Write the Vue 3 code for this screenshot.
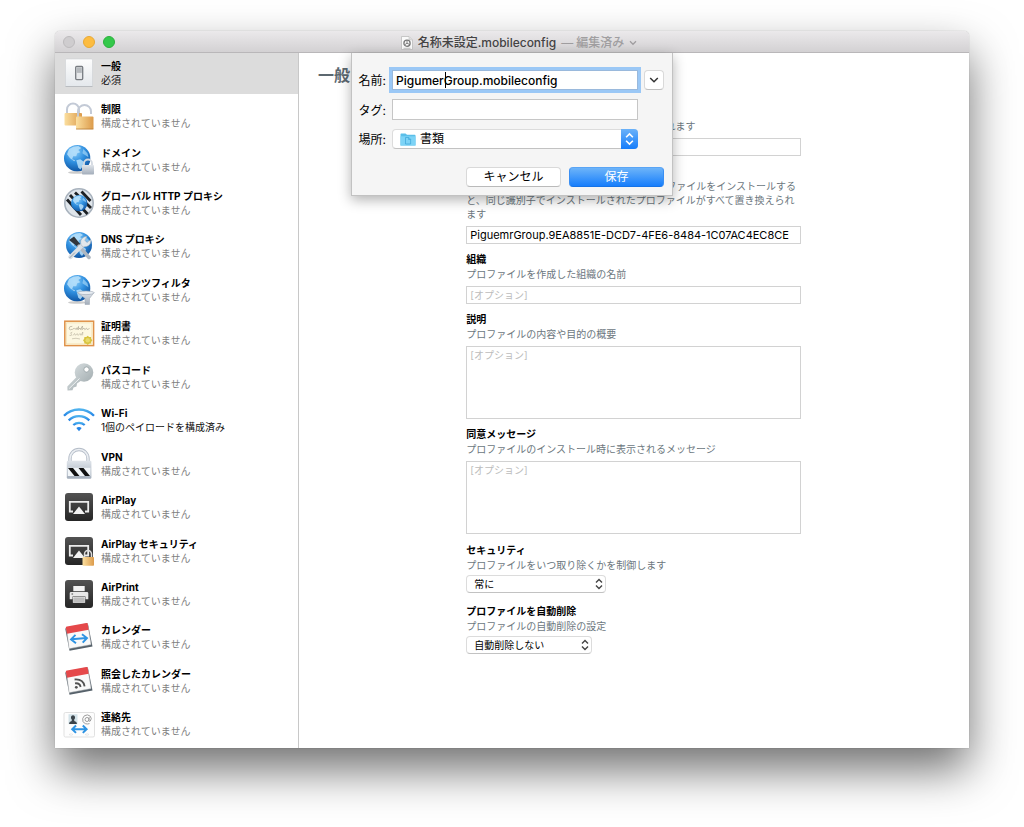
<script setup>
import { ref } from 'vue'

const none = '構成されていません'
const payloads = [
  { icon: 'general', name: '一般', note: '必須', dark: true },
  { icon: 'restrictions', name: '制限', note: none },
  { icon: 'domains', name: 'ドメイン', note: none },
  { icon: 'proxy', name: 'グローバル HTTP プロキシ', note: none },
  { icon: 'dns', name: 'DNS プロキシ', note: none },
  { icon: 'filter', name: 'コンテンツフィルタ', note: none },
  { icon: 'certificate', name: '証明書', note: none },
  { icon: 'passcode', name: 'パスコード', note: none },
  { icon: 'wifi', name: 'Wi-Fi', note: '1個のペイロードを構成済み', dark: true },
  { icon: 'vpn', name: 'VPN', note: none },
  { icon: 'airplay', name: 'AirPlay', note: none },
  { icon: 'airplaylock', name: 'AirPlay セキュリティ', note: none },
  { icon: 'airprint', name: 'AirPrint', note: none },
  { icon: 'calendar', name: 'カレンダー', note: none },
  { icon: 'subscribed', name: '照会したカレンダー', note: none },
  { icon: 'contacts', name: '連絡先', note: none },
]

const selected = ref('general')
const fileName = ref('PigumerGroup.mobileconfig')
const tags = ref('')
const profileName = ref('')
const identifier = ref('PiguemrGroup.9EA8851E-DCD7-4FE6-8484-1C07AC4EC8CE')
const organization = ref('')
const description = ref('')
const consent = ref('')
</script>

<template>
  <svg class="defs" aria-hidden="true">
    <defs>
      <radialGradient id="sea" cx="0.4" cy="0.25" r="0.8">
        <stop offset="0" stop-color="#8fd0fb" />
        <stop offset="0.5" stop-color="#2f8fdf" />
        <stop offset="1" stop-color="#0d4f9c" />
      </radialGradient>
      <linearGradient id="gold" x1="0" x2="1">
        <stop offset="0" stop-color="#fbdf9f" />
        <stop offset="1" stop-color="#dc9b4b" />
      </linearGradient>
      <linearGradient id="steel" x1="0" y1="0" x2="0" y2="1">
        <stop offset="0" stop-color="#dfe4ea" />
        <stop offset="1" stop-color="#a3adba" />
      </linearGradient>
      <linearGradient id="plate" x1="0" y1="0" x2="0" y2="1">
        <stop offset="0" stop-color="#fdfdfd" />
        <stop offset="1" stop-color="#e4e8ec" />
      </linearGradient>
      <linearGradient id="tile" x1="0" y1="0" x2="0" y2="1">
        <stop offset="0" stop-color="#525252" />
        <stop offset="1" stop-color="#252525" />
      </linearGradient>
      <linearGradient id="wave" x1="0" y1="0" x2="0" y2="1">
        <stop offset="0" stop-color="#4db1ee" />
        <stop offset="1" stop-color="#2484e6" />
      </linearGradient>
      <linearGradient id="keymetal" x1="0" y1="0" x2="1" y2="1">
        <stop offset="0" stop-color="#d5dcde" />
        <stop offset="1" stop-color="#a3adb0" />
      </linearGradient>
      <symbol id="globe" viewBox="0 0 26 26">
        <circle cx="13" cy="13" r="13" fill="url(#sea)" />
        <path d="M5 4 Q9 1 14 1 L17 3 14 5 16 7 13 8 12 11 9 11 8 14 11 15 10 16 6 13 3 9z" fill="#b9e0fa" opacity="0.85" />
        <path d="M12 15 L16 14 20 17 19 20 16 24 14 22z" fill="#b9e0fa" opacity="0.85" />
        <path d="M19 4 L23 8 24 12 21 10 18 8z" fill="#9bd0f6" opacity="0.75" />
      </symbol>
      <symbol id="airplay-tile" viewBox="0 0 30 30">
        <rect x="1" y="1" width="28" height="28" rx="3" fill="url(#tile)" />
        <path d="M9 19.5H5.8V9.8H24.2V19.5H21" fill="none" stroke="#ececec" stroke-width="1.8" />
        <path d="M15 14.5 21 22H9z" fill="#f2f2f2" />
      </symbol>
      <symbol id="calendar-page" viewBox="0 0 30 30">
        <path d="M1.2 6.6 23.8 1.2 28.5 24.5 5.5 28.8z" fill="#56616a" />
        <path d="M2.5 5.8 23.5 1.4 27 22.5 5.2 26.6z" fill="#f9f9f9" stroke="#c7c9cb" stroke-width="0.5" />
        <path d="M1.8 5.6Q2 4.8 3 4.6L22.4 1Q23.4 .8 23.7 1.8L24.7 7.8 3 11.8z" fill="#e5484a" />
      </symbol>
    </defs>
  </svg>

  <div class="desktop">
    <section class="window">
      <header class="titlebar">
        <div class="lights">
          <button class="light off" aria-label="閉じる"></button>
          <button class="light yellow" aria-label="しまう"></button>
          <button class="light green" aria-label="拡大"></button>
        </div>
        <h1 class="title">
          <svg class="doc" viewBox="0 0 12 14" aria-hidden="true">
            <path d="M.5.5H8L11.5 4V13.5H.5z" fill="#fafafa" stroke="#bdbdbd" stroke-width="0.8" />
            <path d="M8 .5V4h3.5" fill="#ddd" stroke="#c4c4c4" stroke-width="0.6" />
            <circle cx="6" cy="7.2" r="3.1" fill="none" stroke="#777" stroke-width="1.3" />
            <path d="M6 7.2V4.4M6 7.2 3.8 8.7M6 7.2 8.4 8.4" stroke="#777" stroke-width="0.9" />
            <path d="M2.5 12.3h7" stroke="#bbb" stroke-width="0.9" />
          </svg>
          <span>名称未設定.mobileconfig</span>
          <span class="edited">— 編集済み</span>
          <svg class="chev" viewBox="0 0 8 6" aria-hidden="true">
            <path d="M1 1.3 4 4.3 7 1.3" fill="none" stroke="#a09ea0" stroke-width="1.3" />
          </svg>
        </h1>
      </header>

      <div class="body">
        <nav class="sidebar" aria-label="ペイロード">
          <button
            v-for="p in payloads"
            :key="p.icon"
            class="payload"
            :class="{ selected: selected === p.icon }"
            @click="selected = p.icon"
          >
            <svg class="icon" viewBox="0 0 30 30" aria-hidden="true">
              <g v-if="p.icon === 'general'">
                <rect x="1.5" y="1" width="27" height="27.5" rx="1" fill="url(#plate)" stroke="#c9ccd0" stroke-width="0.5" />
                <path d="M1.5 28.5h27" stroke="#b9bcc0" />
                <rect x="11.7" y="8.4" width="7" height="13.2" rx="1" fill="#e6e8ea" stroke="#777b80" stroke-width="1.3" />
                <rect x="12.6" y="9.3" width="5.2" height="5.6" fill="#b5b9bd" />
              </g>
              <g v-else-if="p.icon === 'restrictions'">
                <path d="M3 13V8.5a6 6 0 0 1 12 0V12" fill="none" stroke="#c3cad6" stroke-width="2" />
                <rect x="0.5" y="12" width="17.5" height="12.5" rx="1" fill="url(#gold)" />
                <path d="M14 16V10.5a6.5 6.5 0 0 1 13 0V13" fill="none" stroke="#c3cad6" stroke-width="2" />
                <rect x="12" y="15.5" width="17.5" height="12.8" rx="1" fill="url(#gold)" />
                <path d="M12 28h17.5" stroke="#b97d37" stroke-width="0.8" />
              </g>
              <g v-else-if="p.icon === 'domains'">
                <ellipse cx="13" cy="27.4" rx="9" ry="1.4" fill="#999" opacity="0.5" />
                <use href="#globe" x="0" y="0" width="26.5" height="26.5" />
                <path d="M20 21V18.5a4 4 0 0 1 8 0V21" fill="none" stroke="#d3d9e1" stroke-width="1.8" />
                <rect x="18" y="20" width="12" height="9.5" rx="0.8" fill="url(#steel)" />
              </g>
              <g v-else-if="p.icon === 'proxy'">
                <circle cx="15" cy="15" r="14.2" fill="#dfe5eb" stroke="#a8b2bd" stroke-width="1.6" />
                <path d="M6 7 23.5 26M3 11.5 17 27M11 4.5 27 20M17.5 3.5 26.5 13" stroke="#1c2024" stroke-width="2.8" />
                <use href="#globe" x="7" y="7" width="16.5" height="16.5" />
              </g>
              <g v-else-if="p.icon === 'dns'">
                <use href="#globe" x="2" y="1" width="26" height="26" />
                <path d="M5 9 10 5.5 17 14 14.5 16.5z" fill="#30353b" />
                <path d="M15 15 25 26.5" stroke="#aeb7c1" stroke-width="3.5" stroke-linecap="round" />
                <path d="M6.5 26 19 13.5" stroke="#d9dfe4" stroke-width="4.2" stroke-linecap="round" />
                <path d="M17 13.5Q15.5 8.5 20 6L23 5.5 20.8 9.2 23 11.5 26.8 8.6Q27.5 14 22.5 15.5L19 16z" fill="#e3e8ec" stroke="#9fa8b1" stroke-width="0.5" />
                <path d="M5.5 27 11 21.5" stroke="#98a2ac" stroke-width="1" />
              </g>
              <g v-else-if="p.icon === 'filter'">
                <ellipse cx="13" cy="27.4" rx="9" ry="1.4" fill="#999" opacity="0.5" />
                <use href="#globe" x="0" y="0" width="26.5" height="26.5" />
                <path d="M13.5 17.5 21 23.5V29.5H25.5V23.5L30 17.5z" fill="url(#steel)" stroke="#9aa5b1" stroke-width="0.5" />
                <ellipse cx="22" cy="17.8" rx="8.2" ry="1.8" fill="#e8edf2" stroke="#9aa5b1" stroke-width="0.6" />
              </g>
              <g v-else-if="p.icon === 'certificate'">
                <rect x="0.8" y="3.2" width="28.8" height="24.4" fill="#fdf8e2" stroke="#df9148" stroke-width="1.5" />
                <rect x="2.5" y="4.9" width="25.4" height="21" fill="none" stroke="#f3dfae" stroke-width="0.7" />
                <path d="M8.3 8.3Q5 8 5 10.8 5.8 12.6 8.5 11.2M8.5 11.5Q10.5 9 11 11.3L12.5 10 13 11.7 14.5 8.5 14.3 11.6 16 10 16.5 11.5 18.5 8 17.8 11.8 20 10 20.8 11.7 22.5 10.2 23.3 11.6 25.5 10.5" fill="none" stroke="#a39c89" stroke-width="0.6" />
                <path d="M8.3 14.2Q5.5 14.5 7.5 16.3 8 18 5.5 17.4M9 17.5 10.5 15.5 11.5 17.3 13.2 15.6 14.2 17.4 16 15.5 17 17.3 18.8 14 18.6 17.3M8 20.8Q12 19.6 16 21" fill="none" stroke="#b5ae9b" stroke-width="0.6" />
                <path d="M23.7 17.8l1.4 1.3 1.9-.1.2 1.9 1.2 1.4-1.2 1.4-.3 1.9-1.8.1-1.4 1.2-1.5-1.2-1.8-.1-.3-1.9-1.1-1.4 1.1-1.4.3-1.9 1.9.1z" fill="#d8c33f" />
                <circle cx="23.7" cy="22.2" r="2.2" fill="#e8da6c" />
              </g>
              <g v-else-if="p.icon === 'passcode'">
                <circle cx="20" cy="10.5" r="9.3" fill="url(#keymetal)" />
                <path d="M13.5 14 3.3 24.5 3.5 28.5 8.5 28.2 9.5 25.5 12.5 24.5 13 21.5 18 18z" fill="url(#keymetal)" />
                <path d="M5.2 26.5 15.5 16.5" stroke="#eff2f3" stroke-width="1" />
                <circle cx="22.5" cy="7.5" r="2.6" fill="#fff" stroke="#8d999c" stroke-width="0.7" />
              </g>
              <g v-else-if="p.icon === 'wifi'">
                <g fill="none" stroke="url(#wave)" stroke-width="2.3">
                  <path d="M0 10.8A21 21 0 0 1 30 10.8" />
                  <path d="M4.7 15.3A15 15 0 0 1 25.3 15.3" />
                  <path d="M9.3 20A8.6 8.6 0 0 1 20.7 20" />
                </g>
                <path d="M12.3 23Q15 21 17.7 23L15 26.3z" fill="#2484e6" />
              </g>
              <g v-else-if="p.icon === 'vpn'">
                <path d="M6 13V9.5a9 9 0 0 1 18 0V13" fill="none" stroke="#b5bdc8" stroke-width="3.4" />
                <path d="M6 13V9.5a9 9 0 0 1 18 0V13" fill="none" stroke="#eceff3" stroke-width="1.5" />
                <rect x="2.8" y="11.8" width="24.6" height="18" rx="1.2" fill="url(#steel)" />
                <rect x="3.8" y="18.8" width="22.6" height="8.2" fill="#f1f5f8" />
                <path d="M4 19h5l6.5 8H10.5zM14.5 19h5l6.5 8H21z" fill="#111" />
              </g>
              <use v-else-if="p.icon === 'airplay'" href="#airplay-tile" width="30" height="30" />
              <g v-else-if="p.icon === 'airplaylock'">
                <use href="#airplay-tile" width="30" height="30" />
                <path d="M20.5 21.5V18a3.5 3.5 0 0 1 7 0V21" fill="none" stroke="#dcdcdc" stroke-width="1.5" />
                <rect x="18.5" y="21" width="11.5" height="8.7" rx="0.8" fill="url(#gold)" />
              </g>
              <g v-else-if="p.icon === 'airprint'">
                <rect x="1" y="1" width="28" height="28" rx="3" fill="url(#tile)" />
                <rect x="9.3" y="7" width="11.4" height="5.2" fill="#f2f2f2" />
                <path d="M7 13H23Q24.3 13 24.3 14.2V20.2H21.5V17.5H8.5V20.2H5.7V14.2Q5.7 13 7 13z" fill="#e9e9e9" />
                <rect x="9.2" y="18.4" width="11.6" height="5" fill="#bdbdbd" stroke="#eee" stroke-width="0.7" />
                <path d="M7.5 15h1.6" stroke="#444" />
              </g>
              <g v-else-if="p.icon === 'calendar'">
                <use href="#calendar-page" width="30" height="30" />
                <path d="M7.5 17.3 22.5 16M11.5 12.8 7 17.3 12 21.2M18 12.2 23 16 18.7 20.6" fill="none" stroke="#2d93e3" stroke-width="1.9" />
              </g>
              <g v-else-if="p.icon === 'subscribed'">
                <use href="#calendar-page" width="30" height="30" />
                <circle cx="12.3" cy="21.3" r="1.4" fill="#525252" />
                <path d="M11 17.3Q16 16.8 16.6 21M10.6 13.5Q19.3 12.8 20.6 20.3" fill="none" stroke="#525252" stroke-width="1.8" />
              </g>
              <g v-else>
                <rect x="0" y="3.5" width="30.5" height="24.5" rx="1.5" fill="#fdfdfd" stroke="#d9d9d9" stroke-width="0.8" />
                <rect x="4.5" y="5.2" width="9" height="10" fill="#d4e3e9" />
                <path d="M9 6.2a2 2.3 0 0 1 1.2 4.2L10.3 12Q13 12.7 13 15H5Q5 12.7 7.7 12L7.8 10.4A2 2.3 0 0 1 9 6.2z" fill="#3b444b" />
                <g fill="none" stroke="#929292" stroke-width="0.9">
                  <circle cx="23" cy="10.5" r="2" />
                  <path d="M25.2 8.2 24.8 11.5Q25 12.8 26.3 12Q28.3 9.5 26.2 7.1 23.5 4.8 20.3 6.8 17.8 9.3 19 12.5 21.2 16 25.5 14.6" />
                </g>
                <path d="M9 20.2H21.5M12 16.5 8.2 20.2 12 23.9M18.8 16.5 22.6 20.2 18.8 23.9" fill="none" stroke="#2d93e3" stroke-width="2" />
                <path d="M5 25.5q2.5-1.5 4 0-1.5 1.8-4 0M21 25.5q2.5-1.5 4 0-1.5 1.8-4 0" fill="#fff" stroke="#ddd" stroke-width="0.6" />
              </g>
            </svg>
            <span class="text">
              <strong>{{ p.name }}</strong>
              <span class="note" :class="{ dark: p.dark }">{{ p.note }}</span>
            </span>
          </button>
        </nav>

        <main class="pane">
          <h2 class="heading">一般</h2>
          <form class="form" @submit.prevent>
            <div class="field">
              <label for="name">名前</label>
              <p>プロファイルの表示名で、デバイスに表示されます</p>
              <input id="name" v-model="profileName" type="text" />
            </div>
            <div class="field">
              <label for="ident">識別子</label>
              <p>プロファイルの固有の識別子。あとからプロファイルをインストールすると、同じ識別子でインストールされたプロファイルがすべて置き換えられます</p>
              <input id="ident" v-model="identifier" type="text" />
            </div>
            <div class="field">
              <label for="org">組織</label>
              <p>プロファイルを作成した組織の名前</p>
              <input id="org" v-model="organization" type="text" placeholder="[オプション]" />
            </div>
            <div class="field">
              <label for="desc">説明</label>
              <p>プロファイルの内容や目的の概要</p>
              <textarea id="desc" v-model="description" placeholder="[オプション]"></textarea>
            </div>
            <div class="field">
              <label for="consent">同意メッセージ</label>
              <p>プロファイルのインストール時に表示されるメッセージ</p>
              <textarea id="consent" v-model="consent" placeholder="[オプション]"></textarea>
            </div>
            <div class="field choice">
              <label for="security">セキュリティ</label>
              <p>プロファイルをいつ取り除くかを制御します</p>
              <span class="popup wide">
                <select id="security"><option>常に</option></select>
                <svg class="arrows" viewBox="0 0 8 12" aria-hidden="true"><path d="M1 4.5 4 1.5 7 4.5M1 7.5 4 10.5 7 7.5" /></svg>
              </span>
            </div>
            <div class="field choice">
              <label for="autoremove">プロファイルを自動削除</label>
              <p>プロファイルの自動削除の設定</p>
              <span class="popup">
                <select id="autoremove"><option>自動削除しない</option></select>
                <svg class="arrows" viewBox="0 0 8 12" aria-hidden="true"><path d="M1 4.5 4 1.5 7 4.5M1 7.5 4 10.5 7 7.5" /></svg>
              </span>
            </div>
          </form>
        </main>

        <form class="sheet" role="dialog" aria-label="保存" @submit.prevent>
          <div class="rows">
            <label for="file">名前:</label>
            <span class="filebox">
              <input id="file" v-model="fileName" type="text" class="focused" />
              <i class="caret"></i>
            </span>
            <button type="button" class="expand" aria-label="詳細を表示">
              <svg viewBox="0 0 10 8" aria-hidden="true"><path d="M1.2 2 5 5.8 8.8 2" /></svg>
            </button>
            <label for="tags">タグ:</label>
            <input id="tags" v-model="tags" type="text" class="tags" />
            <span></span>
            <label for="place">場所:</label>
            <span class="place">
              <select id="place"><option>書類</option></select>
              <svg class="folder" viewBox="0 0 16 13" aria-hidden="true">
                <path d="M.5 1.2Q.5.5 1.2.5H5.5L7 1.8H14.8Q15.5 1.8 15.5 2.5V12.5H.5z" fill="#5bbfe9" />
                <path d="M.5 3.3h15v9.2H.5z" fill="#7dd3f6" />
                <path d="M5.5 4.5H8.8L10.6 6.3V11H5.5zM8.6 4.5v2h2" fill="none" stroke="#42a9dc" stroke-width="0.8" />
              </svg>
              <svg class="arrows blue" viewBox="0 0 8 12" aria-hidden="true"><path d="M1 4.5 4 1.5 7 4.5M1 7.5 4 10.5 7 7.5" /></svg>
            </span>
          </div>
          <div class="actions">
            <button type="button">キャンセル</button>
            <button type="submit" class="primary">保存</button>
          </div>
        </form>
      </div>
    </section>
  </div>
</template>

<style>
body {
  margin: 0;
  background: #fff;
}
</style>

<style scoped>
* {
  box-sizing: border-box;
}
.defs {
  position: absolute;
  width: 0;
  height: 0;
}
.desktop {
  display: flex;
  min-height: 100vh;
  padding: 31px 55px 79px;
  overflow: hidden;
  font-family: Inter, 'Noto Sans CJK JP', sans-serif;
  font-size: 10px;
  line-height: 14px;
  color: #000;
}
button,
input,
select,
textarea {
  font: inherit;
  color: inherit;
  margin: 0;
  outline: none;
}
.window {
  flex: 1;
  display: flex;
  flex-direction: column;
  border-radius: 5px 5px 0 0;
  background: #fff;
  box-shadow: 0 0 1px rgba(0, 0, 0, 0.4), 0 22px 46px rgba(0, 0, 0, 0.56);
}
.titlebar {
  display: flex;
  align-items: center;
  height: 22px;
  padding: 0 8px;
  border-bottom: 1px solid #b9b7b9;
  border-radius: 5px 5px 0 0;
  background: linear-gradient(#ebe9eb, #d3d1d3);
}
.lights {
  display: flex;
  gap: 8px;
}
.light {
  width: 12px;
  height: 12px;
  padding: 0;
  border: 1px solid #bdbbbd;
  border-radius: 50%;
  background: #cfcdcf;
}
.light.yellow {
  background: #fdbc40;
  border-color: #e8a935;
}
.light.green {
  background: #34c84a;
  border-color: #2bb03d;
}
.title {
  flex: 1;
  display: flex;
  justify-content: center;
  align-items: center;
  gap: 5px;
  margin: 0;
  padding: 2px 38px 0 0;
  font-size: 12px;
  font-weight: 500;
  line-height: 20px;
  color: #444344;
}
.doc {
  width: 12px;
  height: 14px;
}
.edited {
  color: #a09ea0;
}
.chev {
  width: 8px;
  height: 6px;
}
.body {
  position: relative;
  flex: 1;
  display: flex;
}
.sidebar {
  flex: 0 0 244px;
  display: grid;
  grid-template-rows: repeat(16, 1fr);
  border-right: 1px solid #c8c8c8;
}
.payload {
  display: flex;
  align-items: center;
  gap: 7px;
  margin-bottom: 2px;
  padding: 0 9px 2px;
  border: 0;
  background: none;
  text-align: left;
}
.payload.selected {
  background: #dcdcdc;
}
.icon {
  flex: none;
  width: 30px;
  height: 30px;
  overflow: visible;
}
.text {
  display: flex;
  flex-direction: column;
  white-space: nowrap;
}
.note {
  color: #808080;
}
.note.dark {
  color: #111;
}
.pane {
  flex: 1;
  display: grid;
  grid-template-columns: 1fr 2fr 1fr;
  align-items: start;
  padding-right: 1px;
}
.heading {
  margin: 0;
  padding: 10px 0 0 19px;
  font-size: 16px;
  line-height: 24px;
  color: #5c6870;
}
.form {
  padding: 50px 0 16px;
}
.field {
  display: flex;
  flex-direction: column;
  align-items: flex-start;
  margin-bottom: 7px;
}
.field label {
  font-weight: 700;
  line-height: 16px;
}
.field p {
  margin: 0 0 5px;
  color: #6c777e;
}
.field input,
.field textarea {
  width: 100%;
  height: 18px;
  padding: 0 3px;
  border: 1px solid #d2d2d2;
  border-radius: 0;
  background: #fff;
}
.field input {
  font-size: 11px;
}
.field input::placeholder,
.field textarea::placeholder {
  font-size: 10px;
  color: #bcbcbc;
}
.field textarea {
  height: 73px;
  padding: 1px 3px;
  resize: none;
}
.choice {
  margin: 8px 0 10px;
}
.choice + .choice {
  margin-top: 0;
}
.choice p {
  margin-bottom: 3px;
}
.popup,
.place,
.filebox {
  position: relative;
  display: flex;
}
.popup {
  width: 126px;
}
.popup.wide {
  width: 140px;
}
select {
  appearance: none;
  width: 100%;
  height: 18px;
  padding: 0 20px 0 7px;
  border: 1px solid #dcdcdc;
  border-bottom-color: #c2c2c2;
  border-radius: 4px;
  background: #fff;
  line-height: 16px;
}
.arrows {
  position: absolute;
  top: 3px;
  right: 3px;
  width: 8px;
  height: 12px;
  fill: none;
  stroke: #444;
  stroke-width: 1.4;
  pointer-events: none;
}
.sheet {
  position: absolute;
  top: 0;
  left: 50%;
  width: 322px;
  transform: translateX(-50%);
  padding: 17px 8px 8px 0;
  border: solid #c2c2c2;
  border-width: 0 1px 1px;
  background: #f5f5f5;
  box-shadow: 0 4px 12px rgba(0, 0, 0, 0.3);
  font-size: 12px;
}
.rows {
  display: grid;
  grid-template-columns: 34px 246px 20px;
  column-gap: 6px;
  row-gap: 9px;
  align-items: center;
}
.rows label {
  padding-top: 2px;
  text-align: right;
  white-space: nowrap;
}
.rows input {
  width: 100%;
  height: 20px;
  padding: 0 3px;
  border: 1px solid #c6c6c6;
  border-radius: 0;
  background: #fff;
}
.rows .focused {
  border-color: #9ab9dc;
  box-shadow: 0 0 0 3px #9bc8f6;
  font-weight: 500;
}
.rows .tags {
  height: 21px;
}
.caret {
  position: absolute;
  top: 2px;
  left: 53px;
  width: 1px;
  height: 16px;
  background: #000;
}
.expand {
  display: grid;
  place-items: center;
  height: 20px;
  padding: 0;
  border: 1px solid #d9d9d9;
  border-bottom-color: #bfbfbf;
  border-radius: 4px;
  background: #fff;
}
.expand svg {
  width: 10px;
  height: 8px;
  fill: none;
  stroke: #333;
  stroke-width: 1.5;
}
.place select {
  height: 20px;
  padding-left: 27px;
}
.folder {
  position: absolute;
  top: 4px;
  left: 8px;
  width: 16px;
  height: 13px;
  pointer-events: none;
}
.arrows.blue {
  top: 0;
  right: 0;
  width: 17px;
  height: 20px;
  padding: 3px 4px;
  border-radius: 0 4px 4px 0;
  background: linear-gradient(#6bb2f9, #157dfb);
  stroke: #fff;
}
.actions {
  display: flex;
  justify-content: flex-end;
  gap: 8px;
  margin-top: 18px;
}
.actions button {
  width: 95px;
  height: 20px;
  padding: 0;
  border: 1px solid #d9d9d9;
  border-bottom-color: #bababa;
  border-radius: 4px;
  background: #fff;
  line-height: 18px;
}
.actions .primary {
  border-color: #5aa5f5 #3a8ff3 #1673e6;
  background: linear-gradient(#6db4f9, #177efc);
  color: #fff;
}
</style>
